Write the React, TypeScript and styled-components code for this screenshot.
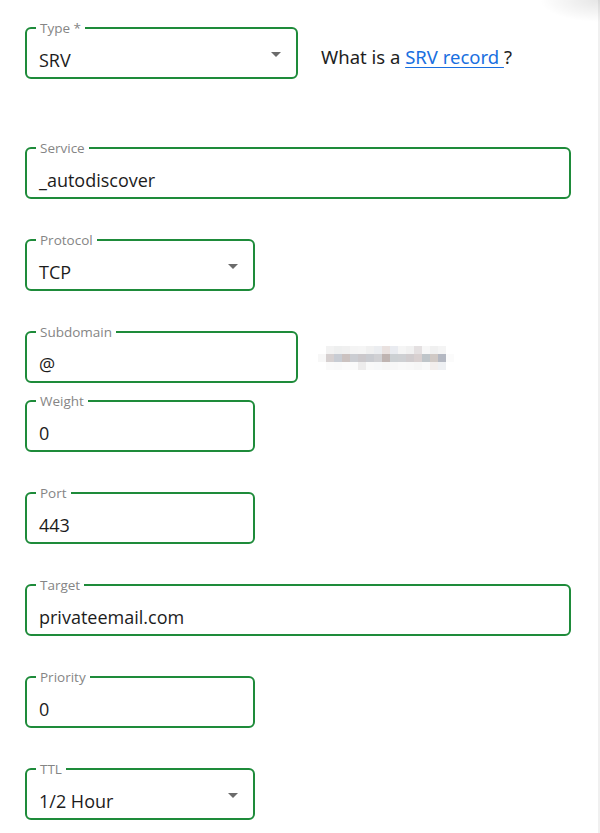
import React from "react";
import styled, { createGlobalStyle } from "styled-components";

const GREEN = "#1e8b3a";

const Global = createGlobalStyle`
  html, body { margin: 0; padding: 0; background: #fff; }
  body {
    font-family: "Open Sans", "Noto Sans", "Liberation Sans", sans-serif;
    color: #1e1e1e;
    min-height: 833px;
    overflow: hidden;
    background:
      radial-gradient(ellipse 60px 22px at 100% 0%, rgba(0,0,0,0.10), rgba(0,0,0,0) 100%),
      linear-gradient(to left, rgba(0,0,0,0.06) 0, rgba(0,0,0,0.06) 2px, transparent 2px),
      #fff;
  }
`;

const Page = styled.div`
  padding: 21px 0 0 25px;
  display: flex;
  flex-direction: column;
`;

const Row = styled.div<{ $mb: number }>`
  display: flex;
  align-items: center;
  margin-bottom: ${(p) => p.$mb}px;
`;

const Box = styled.fieldset<{ $w: number }>`
  position: relative;
  box-sizing: border-box;
  width: ${(p) => p.$w}px;
  height: 58px;
  margin: 0;
  padding: 13px 12px 0 12px;
  border: 2px solid ${GREEN};
  border-radius: 6px;
  min-width: 0;
`;

const Legend = styled.legend`
  font-size: 13.5px;
  line-height: 14px;
  color: #858585;
  padding: 0 4px;
  margin-left: -3px;
`;

const Value = styled.div`
  font-size: 18px;
  line-height: 24px;
  color: #1c1c1c;
  white-space: nowrap;
`;

const Caret = styled.span`
  position: absolute;
  right: 15px;
  top: 50%;
  margin-top: -4px;
  width: 0;
  height: 0;
  border-left: 5px solid transparent;
  border-right: 5px solid transparent;
  border-top: 5px solid #6b6b6b;
`;

const Help = styled.div`
  margin-left: 23px;
  margin-top: 13px;
  font-size: 18.5px;
  color: #1e1e1e;
  font-family: "Noto Sans", "Open Sans", sans-serif;
`;

const Link = styled.a`
  color: #1a6fe0;
  text-decoration: underline;
  text-underline-offset: 3px;
`;

const Blur = styled.div`
  margin-left: 20px;
  margin-top: 8px;
  display: grid;
  grid-template-columns: repeat(17, 8px);
  grid-auto-rows: 8px;
  filter: blur(0.6px);
  opacity: 0.85;
`;

const Cell = styled.span<{ $c: string }>`
  background: ${(p) => p.$c};
`;

const blurRows = [
  ["#fff", "#f0f0f0", "#eceded", "#eeeeee", "#f3f3f3", "#f4f4f4", "#eeeeee", "#e8eaee", "#e6dcda", "#e6e8ee", "#f4f4f4", "#efefef", "#e0dbdc", "#f6f6f6", "#eeeeee", "#f3f3f3", "#fff"],
  ["#f6f6f6", "#d0c8c8", "#bfc4cc", "#c2b8b6", "#c3c5cb", "#c2bfc2", "#c0c3c8", "#c8c8cc", "#b4a8a4", "#c4c8cc", "#c6c8cc", "#c8c4c6", "#d2c8c8", "#b4bcc0", "#c8c0bc", "#a8acb8", "#fbfbfb"],
  ["#fff", "#fafafa", "#f8f8f8", "#fbfbfb", "#fafafa", "#ebe9e9", "#f8f8f8", "#f6f7f8", "#f5f5f5", "#f6f6f6", "#f8f8f8", "#f7f7f7", "#f5f5f5", "#f8f8f8", "#f0ecea", "#eceef2", "#fff"],
];

type F = { label: string; value: string; w: number; select?: boolean; mb: number };

const Field = ({ label, value, w, select }: Omit<F, "mb">) => (
  <Box $w={w}>
    <Legend>{label}</Legend>
    <Value>{value}</Value>
    {select && <Caret />}
  </Box>
);

const rest: F[] = [
  { label: "Weight", value: "0", w: 230, mb: 34 },
  { label: "Port", value: "443", w: 230, mb: 34 },
  { label: "Target", value: "privateemail.com", w: 546, mb: 34 },
  { label: "Priority", value: "0", w: 230, mb: 34 },
  { label: "TTL", value: "1/2 Hour", w: 230, select: true, mb: 0 },
];

export default function App() {
  return (
    <>
      <Global />
      <Page>
        <Row $mb={62}>
          <Field label="Type *" value="SRV" w={273} select />
          <Help>
            What is a <Link href="#">SRV record </Link>?
          </Help>
        </Row>
        <Row $mb={34}>
          <Field label="Service" value="_autodiscover" w={546} />
        </Row>
        <Row $mb={34}>
          <Field label="Protocol" value="TCP" w={230} select />
        </Row>
        <Row $mb={11}>
          <Field label="Subdomain" value="@" w={273} />
          <Blur>
            {blurRows.flatMap((r, i) => r.map((c, j) => <Cell key={`${i}-${j}`} $c={c} />))}
          </Blur>
        </Row>
        {rest.map((f) => (
          <Row key={f.label} $mb={f.mb}>
            <Field label={f.label} value={f.value} w={f.w} select={f.select} />
          </Row>
        ))}
      </Page>
    </>
  );
}
